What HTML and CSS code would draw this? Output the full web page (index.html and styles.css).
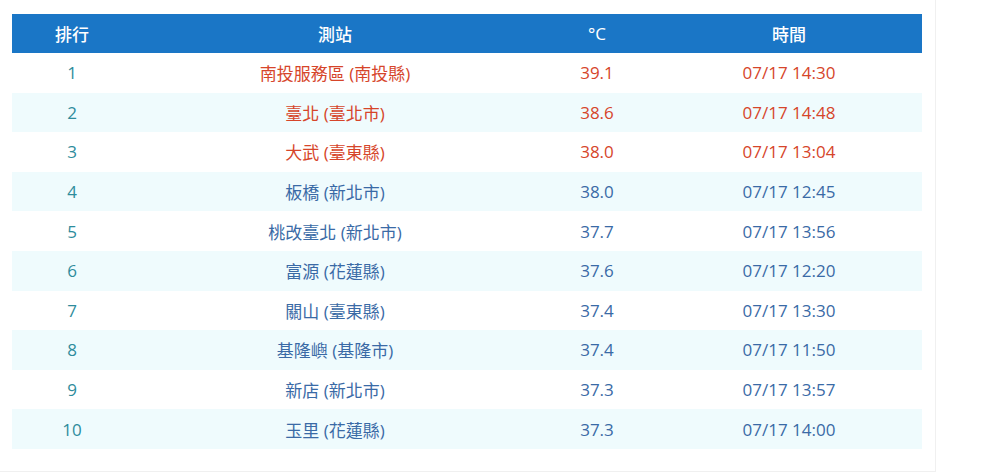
FILE: index.html
```html
<!DOCTYPE html>
<html lang="zh-Hant">
<head>
<meta charset="utf-8">
<link rel="stylesheet" href="styles.css">
</head>
<body>
<div class="panel">
  <table class="rank">
    <colgroup>
      <col class="c1"><col class="c2"><col class="c3"><col class="c4">
    </colgroup>
    <thead>
      <tr><th>排行</th><th>測站</th><th>°C</th><th>時間</th></tr>
    </thead>
    <tbody>
      <tr class="hot"><td class="no">1</td><td>南投服務區 (南投縣)</td><td>39.1</td><td>07/17 14:30</td></tr>
      <tr class="hot"><td class="no">2</td><td>臺北 (臺北市)</td><td>38.6</td><td>07/17 14:48</td></tr>
      <tr class="hot"><td class="no">3</td><td>大武 (臺東縣)</td><td>38.0</td><td>07/17 13:04</td></tr>
      <tr><td class="no">4</td><td>板橋 (新北市)</td><td>38.0</td><td>07/17 12:45</td></tr>
      <tr><td class="no">5</td><td>桃改臺北 (新北市)</td><td>37.7</td><td>07/17 13:56</td></tr>
      <tr><td class="no">6</td><td>富源 (花蓮縣)</td><td>37.6</td><td>07/17 12:20</td></tr>
      <tr><td class="no">7</td><td>關山 (臺東縣)</td><td>37.4</td><td>07/17 13:30</td></tr>
      <tr><td class="no">8</td><td>基隆嶼 (基隆市)</td><td>37.4</td><td>07/17 11:50</td></tr>
      <tr><td class="no">9</td><td>新店 (新北市)</td><td>37.3</td><td>07/17 13:57</td></tr>
      <tr><td class="no">10</td><td>玉里 (花蓮縣)</td><td>37.3</td><td>07/17 14:00</td></tr>
    </tbody>
  </table>
</div>
</body>
</html>
```
FILE: styles.css
```css
html, body {
  margin: 0;
  padding: 0;
  background: #ffffff;
}
body {
  font-family: "Open Sans", "Noto Sans CJK TC", sans-serif;
}
.panel {
  width: 923px;
  height: 457px;
  padding: 14px 0 0 12px;
  border-right: 1px solid #f0f0f0;
  border-bottom: 1px solid #f0f0f0;
}
.rank {
  width: 910px;
  border-collapse: collapse;
  table-layout: fixed;
}
.c1 { width: 120px; }
.c2 { width: 406px; }
.c3 { width: 118px; }
.c4 { width: 266px; }
.rank th {
  height: 39px;
  padding: 0;
  background: #1a76c6;
  color: #ffffff;
  font-size: 17px;
  font-weight: 500;
  text-align: center;
}
.rank td {
  height: 39.6px;
  padding: 0;
  text-align: center;
  font-size: 17px;
  color: #3a6aa6;
}
.rank td.no {
  color: #2e8c9c;
}
.rank tbody tr:nth-child(even) td {
  background: #effbfd;
}
.rank tr.hot td {
  color: #d6452a;
}
.rank tr.hot td.no {
  color: #2e8c9c;
}
```
